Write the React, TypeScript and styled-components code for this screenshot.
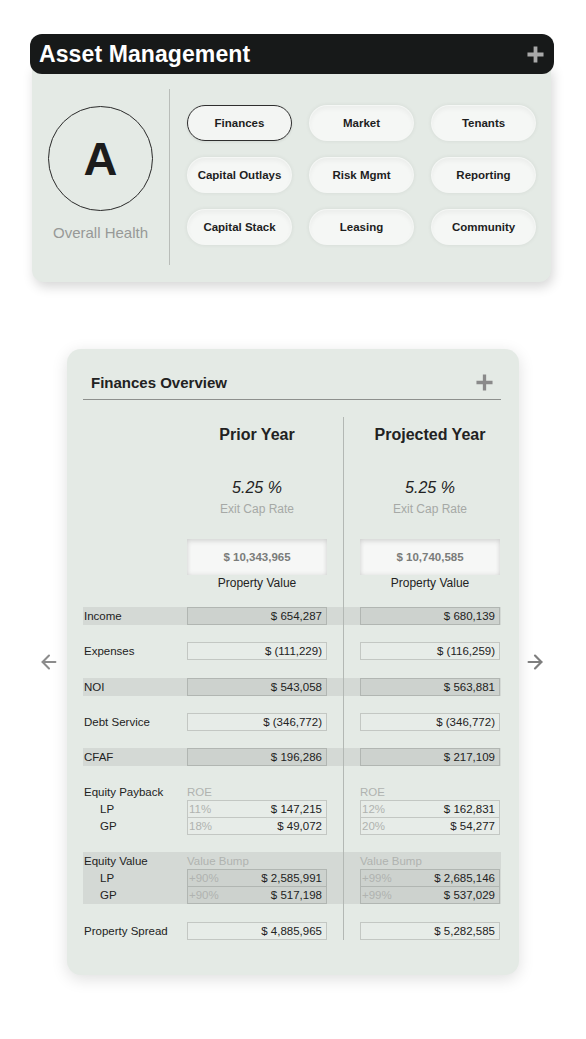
import React from "react";
import styled, { createGlobalStyle } from "styled-components";
import { ArrowLeft, ArrowRight } from "lucide-react";

const GlobalStyle = createGlobalStyle`
  body {
    margin: 0;
    background: #ffffff;
    font-family: "Liberation Sans", Arial, sans-serif;
    color: #222;
  }
`;

const tabs = [
  "Finances",
  "Market",
  "Tenants",
  "Capital Outlays",
  "Risk Mgmt",
  "Reporting",
  "Capital Stack",
  "Leasing",
  "Community",
];

const simpleRows = [
  { label: "Income", prior: "$ 654,287", projected: "$ 680,139", shaded: true },
  { label: "Expenses", prior: "$ (111,229)", projected: "$ (116,259)", shaded: false },
  { label: "NOI", prior: "$ 543,058", projected: "$ 563,881", shaded: true },
  { label: "Debt Service", prior: "$ (346,772)", projected: "$ (346,772)", shaded: false },
  { label: "CFAF", prior: "$ 196,286", projected: "$ 217,109", shaded: true },
];

const equityBlocks = [
  {
    label: "Equity Payback",
    hint: "ROE",
    shaded: false,
    rows: [
      { label: "LP", prior: ["11%", "$ 147,215"], projected: ["12%", "$ 162,831"] },
      { label: "GP", prior: ["18%", "$ 49,072"], projected: ["20%", "$ 54,277"] },
    ],
  },
  {
    label: "Equity Value",
    hint: "Value Bump",
    shaded: true,
    rows: [
      { label: "LP", prior: ["+90%", "$ 2,585,991"], projected: ["+99%", "$ 2,685,146"] },
      { label: "GP", prior: ["+90%", "$ 517,198"], projected: ["+99%", "$ 537,029"] },
    ],
  },
];

const years = [
  { title: "Prior Year", rate: "5.25 %", value: "$ 10,343,965" },
  { title: "Projected Year", rate: "5.25 %", value: "$ 10,740,585" },
];

const PlusIcon = ({ size, thickness, color }: { size: number; thickness: number; color: string }) => (
  <svg width={size} height={size} viewBox="0 0 18 18">
    <path d="M9 0.5v17M0.5 9h17" stroke={color} strokeWidth={thickness} fill="none" />
  </svg>
);

const App: React.FC = () => {
  return (
    <Page>
      <GlobalStyle />
      <AssetCard>
        <TitleBar>
          <Title>Asset Management</Title>
          <PlusIcon size={17} thickness={4} color="#a9a9a9" />
        </TitleBar>
        <AssetBody>
          <HealthSection>
            <HealthCircle>A</HealthCircle>
            <HealthLabel>Overall Health</HealthLabel>
          </HealthSection>
          <VDivider />
          <TabGrid>
            {tabs.map((t) => (
              <Pill key={t} $active={t === "Finances"}>
                {t}
              </Pill>
            ))}
          </TabGrid>
        </AssetBody>
      </AssetCard>

      <Carousel>
        <ArrowSlot $width={37}>
          <ArrowLeft size={22} strokeWidth={2.2} color="#8c8c8c" />
        </ArrowSlot>
        <FinanceCard>
          <CardHeader>
            <CardTitle>Finances Overview</CardTitle>
            <PlusIcon size={17} thickness={3.5} color="#8a8a8a" />
          </CardHeader>
          <Table>
            <GridRow>
              {years.map((y, i) => (
                <YearCol key={y.title} $col={i === 0 ? 2 : 4}>
                  <YearTitle>{y.title}</YearTitle>
                  <Rate>{y.rate}</Rate>
                  <SubLabel>Exit Cap Rate</SubLabel>
                  <ValueBox>{y.value}</ValueBox>
                  <PropLabel>Property Value</PropLabel>
                </YearCol>
              ))}
            </GridRow>

            {simpleRows.map((r) => (
              <GridRow key={r.label} $shaded={r.shaded} $height={18}>
                <RowLabel>{r.label}</RowLabel>
                <Cell $col={2} $shaded={r.shaded}>
                  <span>{r.prior}</span>
                </Cell>
                <Cell $col={4} $shaded={r.shaded}>
                  <span>{r.projected}</span>
                </Cell>
              </GridRow>
            ))}

            {equityBlocks.map((b) => (
              <Block key={b.label} $shaded={b.shaded}>
                <GridRow $height={17}>
                  <RowLabel>{b.label}</RowLabel>
                  <Hint $col={2}>{b.hint}</Hint>
                  <Hint $col={4}>{b.hint}</Hint>
                </GridRow>
                {b.rows.map((s, i) => (
                  <GridRow key={s.label} $height={18} $overlap={i > 0}>
                    <RowLabel $indent>{s.label}</RowLabel>
                    <Cell $col={2} $shaded={b.shaded} $split>
                      <Pct>{s.prior[0]}</Pct>
                      <span>{s.prior[1]}</span>
                    </Cell>
                    <Cell $col={4} $shaded={b.shaded} $split>
                      <Pct>{s.projected[0]}</Pct>
                      <span>{s.projected[1]}</span>
                    </Cell>
                  </GridRow>
                ))}
              </Block>
            ))}

            <GridRow $height={18}>
              <RowLabel>Property Spread</RowLabel>
              <Cell $col={2}>
                <span>$ 4,885,965</span>
              </Cell>
              <Cell $col={4}>
                <span>$ 5,282,585</span>
              </Cell>
            </GridRow>
          </Table>
        </FinanceCard>
        <ArrowSlot $width={32}>
          <ArrowRight size={22} strokeWidth={2.4} color="#7e7e7e" />
        </ArrowSlot>
      </Carousel>
    </Page>
  );
};

export default App;

const Page = styled.div`
  padding: 34px 0 60px 30px;
  width: 586px;
  box-sizing: border-box;
`;

const AssetCard = styled.section`
  width: 524px;
  display: flex;
  flex-direction: column;
`;

const TitleBar = styled.div`
  position: relative;
  z-index: 1;
  height: 40px;
  background: #171919;
  border-radius: 12px;
  display: flex;
  align-items: center;
  justify-content: space-between;
  padding: 0 10px 0 9px;
`;

const Title = styled.h1`
  margin: 0;
  color: #ffffff;
  font-size: 23px;
  font-weight: 700;
  letter-spacing: 0.1px;
`;

const AssetBody = styled.div`
  margin: -8px 3px 0 2px;
  height: 216px;
  box-sizing: border-box;
  padding: 23px 14px 17px 0;
  background: #e4eae5;
  border-radius: 0 0 12px 12px;
  box-shadow: 2px 5px 12px rgba(0, 0, 0, 0.16);
  display: flex;
`;

const HealthSection = styled.div`
  width: 137px;
  display: flex;
  flex-direction: column;
  align-items: center;
  padding-top: 17px;
`;

const HealthCircle = styled.div`
  width: 105px;
  height: 105px;
  box-sizing: border-box;
  border: 1px solid #2a2a2a;
  border-radius: 50%;
  display: flex;
  align-items: center;
  justify-content: center;
  font-size: 47px;
  font-weight: 700;
  color: #1c1c1c;
`;

const HealthLabel = styled.div`
  margin-top: 13px;
  font-size: 15px;
  line-height: 18px;
  color: #979997;
`;

const VDivider = styled.div`
  width: 1px;
  background: #b9bdb9;
  align-self: stretch;
`;

const TabGrid = styled.div`
  margin: 16px 0 0 17px;
  align-self: flex-start;
  display: grid;
  grid-template-columns: repeat(3, 105px);
  grid-auto-rows: 36px;
  column-gap: 17px;
  row-gap: 16px;
`;

const Pill = styled.div<{ $active?: boolean }>`
  box-sizing: border-box;
  border-radius: 18px;
  display: flex;
  align-items: center;
  justify-content: center;
  font-size: 11.5px;
  font-weight: 700;
  color: #1e1e1e;
  background: ${(p) => (p.$active ? "#f3f5f3" : "#f5f7f5")};
  border: ${(p) => (p.$active ? "1px solid #2f2f2f" : "1px solid transparent")};
  box-shadow: ${(p) =>
    p.$active
      ? "0 1px 3px rgba(0,0,0,0.08)"
      : "inset 0 3px 4px rgba(0,0,0,0.04), 0 0 4px rgba(0,0,0,0.07)"};
`;

const Carousel = styled.div`
  margin-top: 67px;
  display: flex;
  align-items: center;
`;

const ArrowSlot = styled.div<{ $width: number }>`
  width: ${(p) => p.$width}px;
  display: flex;
  justify-content: center;
`;

const FinanceCard = styled.section`
  width: 452px;
  box-sizing: border-box;
  padding: 17px 18px 35px 16px;
  background: #e4eae5;
  border-radius: 14px;
  box-shadow: 0 4px 16px rgba(0, 0, 0, 0.13);
`;

const CardHeader = styled.div`
  height: 34px;
  box-sizing: border-box;
  border-bottom: 1px solid #8d908d;
  display: flex;
  align-items: center;
  justify-content: space-between;
  padding: 0 8px 0 8px;
`;

const CardTitle = styled.h2`
  margin: 0;
  font-size: 15px;
  font-weight: 700;
  color: #222;
`;

const Table = styled.div`
  position: relative;
  margin-top: 17px;
  display: flex;
  flex-direction: column;
  gap: 17.2px;

  &::after {
    content: "";
    position: absolute;
    left: 260px;
    top: 0;
    bottom: 0;
    width: 1px;
    background: #b3b8b4;
  }
`;

const GridRow = styled.div<{ $shaded?: boolean; $height?: number; $overlap?: boolean }>`
  display: grid;
  grid-template-columns: 104px 140px 33px 140px;
  align-items: center;
  ${(p) => (p.$height ? `height: ${p.$height}px;` : "")}
  ${(p) => (p.$overlap ? "margin-top: -1px;" : "")}
  background: ${(p) => (p.$shaded ? "#d4d9d5" : "transparent")};
`;

const Block = styled.div<{ $shaded?: boolean }>`
  display: flex;
  flex-direction: column;
  background: ${(p) => (p.$shaded ? "#d4d9d5" : "transparent")};
`;

const YearCol = styled.div<{ $col: number }>`
  grid-column: ${(p) => p.$col};
  display: flex;
  flex-direction: column;
  align-items: center;
`;

const YearTitle = styled.div`
  margin-top: 8px;
  font-size: 16px;
  line-height: 20px;
  font-weight: 700;
  color: #222;
`;

const Rate = styled.div`
  margin-top: 33px;
  font-size: 16px;
  line-height: 20px;
  font-style: italic;
  color: #222;
`;

const SubLabel = styled.div`
  margin-top: 4px;
  font-size: 12px;
  line-height: 14px;
  color: #a6a9a6;
`;

const ValueBox = styled.div`
  margin-top: 23px;
  width: 140px;
  height: 36px;
  display: flex;
  align-items: center;
  justify-content: center;
  background: #f6f7f6;
  font-size: 11.5px;
  font-weight: 700;
  color: #7a7c7a;
  box-shadow: inset 0 3px 5px rgba(0, 0, 0, 0.08), inset 0 0 5px rgba(0, 0, 0, 0.1);
`;

const PropLabel = styled.div`
  margin-top: 1px;
  font-size: 12px;
  line-height: 14px;
  color: #222;
`;

const RowLabel = styled.div<{ $indent?: boolean }>`
  grid-column: 1;
  padding-left: ${(p) => (p.$indent ? "17px" : "1px")};
  font-size: 11.5px;
  color: #222;
  white-space: nowrap;
`;

const Cell = styled.div<{ $col: number; $shaded?: boolean; $split?: boolean }>`
  grid-column: ${(p) => p.$col};
  height: 18px;
  box-sizing: border-box;
  border: 1px solid ${(p) => (p.$shaded ? "#b1b6b2" : "#c3c7c3")};
  background: ${(p) => (p.$shaded ? "#cdd2ce" : "#e7ece8")};
  display: flex;
  align-items: center;
  justify-content: ${(p) => (p.$split ? "space-between" : "flex-end")};
  padding: 0 4px 0 1px;
  font-size: 11.5px;
  color: #222;
`;

const Pct = styled.span`
  color: #b0b3b0;
`;

const Hint = styled.div<{ $col: number }>`
  grid-column: ${(p) => p.$col};
  font-size: 11.5px;
  color: #b0b3b0;
`;
